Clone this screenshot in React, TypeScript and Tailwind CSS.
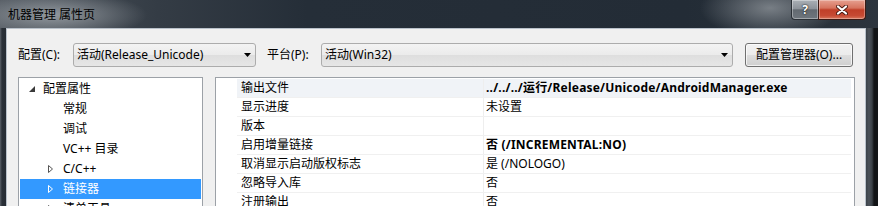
import React from "react";

function ExpandedArrow() {
  return (
    <svg width="6" height="6" viewBox="0 0 6 6" className="block">
      <path d="M6 0V6H0z" fill="#3a3a3a" />
    </svg>
  );
}

function CollapsedArrow({ white }: { white?: boolean }) {
  return (
    <svg width="5" height="8" viewBox="0 0 5 8" className="block">
      <path d="M0.5 0.5L4.5 4L0.5 7.5z" fill="none" stroke={white ? "#ffffff" : "#555555"} strokeWidth="1" />
    </svg>
  );
}

function DropArrow() {
  return (
    <svg width="7" height="4" viewBox="0 0 7 4" className="block">
      <path d="M0 0H7L3.5 4z" fill="#000" />
    </svg>
  );
}

type TreeItem = { text: string; level: 0 | 1; arrow?: "exp" | "col"; selected?: boolean };

const tree: TreeItem[] = [
  { text: "配置属性", level: 0, arrow: "exp" },
  { text: "常规", level: 1 },
  { text: "调试", level: 1 },
  { text: "VC++ 目录", level: 1 },
  { text: "C/C++", level: 1, arrow: "col" },
  { text: "链接器", level: 1, arrow: "col", selected: true },
  { text: "清单工具", level: 1, arrow: "col" },
];

type GridRow = { name: string; value: string; bold?: boolean };

const rows: GridRow[] = [
  { name: "输出文件", value: "../../../运行/Release/Unicode/AndroidManager.exe", bold: true },
  { name: "显示进度", value: "未设置" },
  { name: "版本", value: "" },
  { name: "启用增量链接", value: "否 (/INCREMENTAL:NO)", bold: true },
  { name: "取消显示启动版权标志", value: "是 (/NOLOGO)" },
  { name: "忽略导入库", value: "否" },
  { name: "注册输出", value: "否" },
];

export default function App() {
  return (
    <div className="relative w-[878px] h-[206px] overflow-hidden bg-[#1c2228] font-['Noto_Sans','Noto_Sans_CJK_SC',sans-serif] text-[12px] text-black">
      {/* Title bar */}
      <div className="h-[28px] flex justify-between bg-[radial-gradient(ellipse_95px_24px_at_52px_15px,rgba(150,156,162,0.95),rgba(150,156,162,0)),radial-gradient(ellipse_70px_30px_at_770px_8px,rgba(140,146,152,0.8),rgba(140,146,152,0)),linear-gradient(90deg,#4e555d_0%,#343c45_18%,#252e38_35%,#232c36_78%,#2c343d_100%)]">
        <div className="pl-[8px] pt-[7px] leading-[16px] text-[12px] text-black">机器管理 属性页</div>
        <div className="flex mr-[12px] h-[20px]">
          <div className="w-[27px] h-full flex items-center justify-center rounded-bl-[4px] border border-t-0 border-r-0 border-[#2a3036] bg-[linear-gradient(180deg,#aab0b6_0%,#8d939a_45%,#636a71_52%,#6f767d_100%)] shadow-[inset_0_0_0_1px_rgba(255,255,255,0.35)]">
            <span className="text-white font-bold text-[12px] leading-none [text-shadow:0_0_2px_#222,0_0_1px_#000]">?</span>
          </div>
          <div className="w-[48px] h-full flex items-center justify-center rounded-br-[4px] border border-t-0 border-[#3b1a14] bg-[linear-gradient(180deg,#e6a090_0%,#d6735e_42%,#c03f28_52%,#c64a33_82%,#d8775c_100%)] shadow-[inset_0_0_0_1px_rgba(255,255,255,0.3)]">
            <svg width="12" height="10" viewBox="0 0 12 10" className="block">
              <path d="M2 1.5L10 8.5M10 1.5L2 8.5" stroke="#4a1a12" strokeWidth="4" strokeLinecap="round" />
              <path d="M2 1.5L10 8.5M10 1.5L2 8.5" stroke="#ffffff" strokeWidth="2.2" strokeLinecap="round" />
            </svg>
          </div>
        </div>
      </div>

      {/* Body row with frame edges */}
      <div className="flex h-[178px]">
        <div className="w-[6px] h-full bg-[linear-gradient(90deg,#5b6168_0px,#2a3038_2px,#262c33_6px)]" />
        <div className="w-[860px] h-full border-x border-t border-[#b9c1ca] bg-[#f0f0f0] pl-[11px] pt-[14px]">
          {/* Config row */}
          <div className="flex items-center h-[24px]">
            <div className="w-[55px]">配置(C):</div>
            <div className="w-[183px] h-[24px] flex items-center justify-between pl-[3px] pr-[4px] rounded-[3px] border border-[#acacac] bg-[linear-gradient(180deg,#f3f3f3_0%,#ebebeb_50%,#dedede_51%,#e6e6e6_100%)]">
              <span>活动(Release_Unicode)</span>
              <DropArrow />
            </div>
            <div className="ml-[11px] w-[54px]">平台(P):</div>
            <div className="w-[412px] h-[24px] flex items-center justify-between pl-[3px] pr-[4px] rounded-[3px] border border-[#acacac] bg-[linear-gradient(180deg,#f3f3f3_0%,#ebebeb_50%,#dedede_51%,#e6e6e6_100%)]">
              <span>活动(Win32)</span>
              <DropArrow />
            </div>
            <div className="ml-[12px] w-[108px] h-[24px] flex items-center justify-center rounded-[3px] border border-[#707070] bg-[linear-gradient(180deg,#f2f2f2_0%,#ebebeb_50%,#dddddd_51%,#cfcfcf_100%)] shadow-[inset_0_0_0_1px_rgba(255,255,255,0.7)]">
              配置管理器(O)...
            </div>
          </div>

          {/* Panels */}
          <div className="flex mt-[10px]">
            {/* Tree */}
            <div className="w-[185px] h-[140px] border border-[#9ca1a7] bg-white p-px">
              {tree.map((t, i) => (
                <div
                  key={i}
                  className={
                    "h-[20px] flex items-center " +
                    (t.selected ? "bg-[#3399ff] text-white" : "")
                  }
                >
                  {t.level === 0 ? (
                    <>
                      <div className="w-[9px]" />
                      <ExpandedArrow />
                      <div className="w-[8px]" />
                    </>
                  ) : (
                    <>
                      <div className="w-[28px]" />
                      <div className="w-[5px]">{t.arrow === "col" ? <CollapsedArrow white={t.selected} /> : null}</div>
                      <div className="w-[10px]" />
                    </>
                  )}
                  <span className="whitespace-nowrap">{t.text}</span>
                </div>
              ))}
            </div>

            {/* Property grid */}
            <div className="ml-[12px] w-[640px] h-[140px] border border-[#9ca1a7] bg-white pt-px pr-[3px] flex">
              <div className="w-[21px] shrink-0" />
              <div className="flex-1">
                {rows.map((r, i) => (
                  <div
                    key={i}
                    className={
                      "h-[19px] flex border-b border-[#f0f0f0] " + (i === 0 ? "bg-[#f0f3f7]" : "")
                    }
                  >
                    <div className="w-[247px] shrink-0 border-r border-[#eeeeee] pl-[4px] flex items-center whitespace-nowrap">
                      {r.name}
                    </div>
                    <div className={"pl-[2px] flex items-center whitespace-nowrap " + (r.bold ? "font-bold tracking-[0.2px]" : "")}>
                      {r.value}
                    </div>
                  </div>
                ))}
              </div>
            </div>
          </div>
        </div>
        <div className="flex-1 h-full bg-[linear-gradient(90deg,#3c434a_0px,#4c5259_3px,#3a4046_6px,#121416_8px)]" />
      </div>
    </div>
  );
}
